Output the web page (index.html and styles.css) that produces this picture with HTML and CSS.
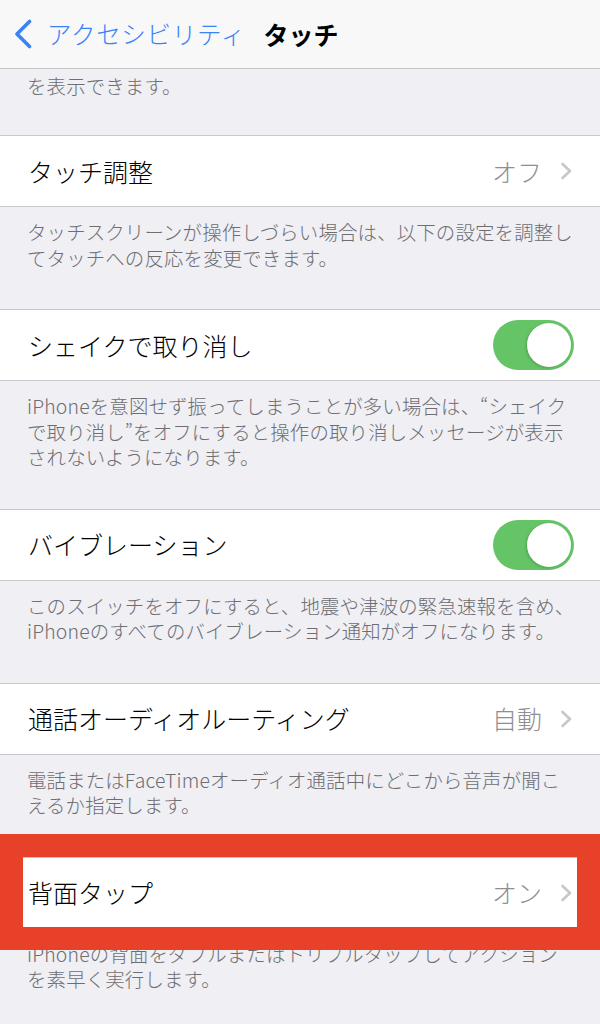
FILE: index.html
```html
<!DOCTYPE html>
<html lang="ja">
<head>
<meta charset="utf-8">
<title>タッチ</title>
<link rel="stylesheet" href="styles.css">
</head>
<body>
<div class="page">
  <header class="nav">
    <div class="back">
      <svg class="back-chev" width="20" height="30" viewBox="0 0 20 30"><path d="M16.5 2.5 L4 15 L16.5 27.5" fill="none" stroke="#3a82f6" stroke-width="3.6" stroke-linecap="round" stroke-linejoin="round"/></svg>
      <span class="back-label">アクセシビリティ</span>
    </div>
    <div class="nav-title">タッチ</div>
    <div></div>
  </header>

  <div class="footer footer-top"><p>を表示できます。</p></div>

  <div class="row">
    <span class="label">タッチ調整</span>
    <span class="detail"><span class="value">オフ</span><svg class="chev" width="13" height="18" viewBox="0 0 13 18"><path d="M2.5 2 L10 9 L2.5 16" fill="none" stroke="#c7c7cc" stroke-width="2.6" stroke-linecap="round" stroke-linejoin="round"/></svg></span>
  </div>
  <div class="footer"><p>タッチスクリーンが操作しづらい場合は、以下の設定を調整し<br>てタッチへの反応を変更できます。</p></div>

  <div class="row">
    <span class="label">シェイクで取り消し</span>
    <span class="toggle"><span class="knob"></span></span>
  </div>
  <div class="footer"><p>iPhoneを意図せず振ってしまうことが多い場合は、“シェイク<br>で取り消し”をオフにすると操作の取り消しメッセージが表示<br>されないようになります。</p></div>

  <div class="row">
    <span class="label">バイブレーション</span>
    <span class="toggle"><span class="knob"></span></span>
  </div>
  <div class="footer"><p>このスイッチをオフにすると、地震や津波の緊急速報を含め、<br>iPhoneのすべてのバイブレーション通知がオフになります。</p></div>

  <div class="row">
    <span class="label">通話オーディオルーティング</span>
    <span class="detail"><span class="value">自動</span><svg class="chev" width="13" height="18" viewBox="0 0 13 18"><path d="M2.5 2 L10 9 L2.5 16" fill="none" stroke="#c7c7cc" stroke-width="2.6" stroke-linecap="round" stroke-linejoin="round"/></svg></span>
  </div>
  <div class="footer"><p>電話またはFaceTimeオーディオ通話中にどこから音声が聞こ<br>えるか指定します。</p></div>

  <div class="highlight">
    <div class="row">
      <span class="label">背面タップ</span>
      <span class="detail"><span class="value">オン</span><svg class="chev" width="13" height="18" viewBox="0 0 13 18"><path d="M2.5 2 L10 9 L2.5 16" fill="none" stroke="#c7c7cc" stroke-width="2.6" stroke-linecap="round" stroke-linejoin="round"/></svg></span>
    </div>
    <div class="mark"></div>
  </div>
  <div class="footer"><p>iPhoneの背面をダブルまたはトリプルタップしてアクション<br>を素早く実行します。</p></div>
</div>
</body>
</html>
```

FILE: styles.css
```css
html, body {
  margin: 0;
  padding: 0;
  background: #efeff4;
}

body {
  font-family: "Noto Sans CJK JP", "Noto Sans", sans-serif;
  font-weight: 300;
  color: #000;
}

.page {
  width: 600px;
  overflow: hidden;
}

.nav {
  height: 68px;
  background: #f8f8f8;
  border-bottom: 1px solid #c4c4c8;
  display: grid;
  grid-template-columns: 1fr auto 1fr;
  align-items: center;
}

.back {
  display: flex;
  align-items: center;
  padding-left: 13px;
  gap: 14px;
  white-space: nowrap;
}

.back-chev {
  display: block;
}

.back-label {
  font-size: 24.5px;
  letter-spacing: 0.7px;
  color: #3a82f6;
  line-height: 1;
}

.nav-title {
  font-size: 25px;
  font-weight: 700;
  line-height: 1;
  padding-left: 2px;
}

.footer {
  padding: 12px 27px 39px 27px;
}

.footer p {
  margin: 0;
  font-size: 19.4px;
  letter-spacing: 0.18px;
  line-height: 25.5px;
  color: #6d6d72;
  white-space: nowrap;
}

.footer-top {
  height: 66px;
  box-sizing: border-box;
  padding-top: 4px;
  padding-bottom: 0;
}

.row {
  height: 70px;
  background: #fff;
  border-top: 1px solid #c8c7cc;
  border-bottom: 1px solid #c8c7cc;
  display: flex;
  align-items: center;
  justify-content: space-between;
  padding: 0 26px 0 28px;
}

.label {
  font-size: 25px;
  line-height: 1;
  white-space: nowrap;
}

.detail {
  display: flex;
  align-items: center;
  gap: 18px;
}

.value {
  font-size: 25px;
  line-height: 1;
  color: #8e8e93;
}

.chev {
  display: block;
  margin-right: 1px;
}

.toggle {
  width: 81px;
  height: 50px;
  border-radius: 25px;
  background: #65c466;
  position: relative;
  box-sizing: border-box;
}

.knob {
  position: absolute;
  top: 3px;
  right: 3px;
  width: 44px;
  height: 44px;
  border-radius: 50%;
  background: #fff;
  box-shadow: -1px 1px 3px rgba(0, 0, 0, 0.18);
}

.highlight {
  position: relative;
}

.mark {
  position: absolute;
  top: -23px;
  bottom: -21px;
  left: 0;
  right: 0;
  border: 23px solid #e8412a;
  pointer-events: none;
}
```
